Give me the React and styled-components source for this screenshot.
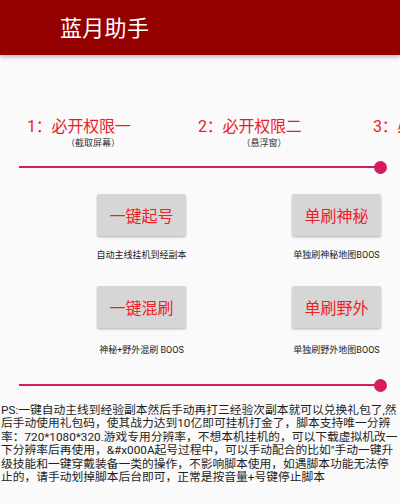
import React from 'react'
import styled, { createGlobalStyle } from 'styled-components'

const GlobalStyle = createGlobalStyle`
  html, body {
    margin: 0;
    padding: 0;
    background: #fafafa;
  }
  body {
    font-family: Roboto, "Noto Sans CJK SC", sans-serif;
  }
`

const Page = styled.div`
  width: 400px;
  height: 504px;
  overflow: hidden;
  background: #fafafa;
`

const Header = styled.div`
  height: 55px;
  background: #940000;
  display: flex;
  align-items: center;
  padding: 0 0 4px 60px;
  box-sizing: border-box;
  box-shadow: 0 2px 4px rgba(0, 0, 0, 0.25);
  position: relative;
`

const Title = styled.h1`
  margin: 0;
  color: #ffffff;
  font-size: 22px;
  font-weight: 400;
  letter-spacing: 0.3px;
`

const Steps = styled.div`
  display: flex;
  padding-left: 27px;
  margin-top: 62px;
  overflow: hidden;
  white-space: nowrap;
`

const Step = styled.div`
  flex: 0 0 ${p => p.$w}px;
  display: flex;
  flex-direction: column;
`

const StepLabel = styled.div`
  color: #e81c2c;
  font-size: 16px;
  line-height: 19px;
  letter-spacing: -0.2px;
`

const StepSub = styled.div`
  width: 132px;
  text-align: center;
  color: #333;
  font-size: 9px;
  line-height: 11px;
  margin-top: 2px;
`

const Slider = styled.div`
  display: flex;
  align-items: center;
  height: 14px;
  padding: 0 13px 0 19px;
  margin-top: ${p => p.$top}px;
`

const Track = styled.div`
  flex: 1;
  height: 2px;
  background: #d81b60;
`

const Thumb = styled.div`
  width: 13px;
  height: 13px;
  border-radius: 50%;
  background: #d81b60;
  margin-left: -6px;
  flex: 0 0 auto;
`

const ActionRow = styled.div`
  display: flex;
  gap: 106px;
  padding-left: 97px;
  margin-top: ${p => p.$top}px;
`

const Action = styled.div`
  width: 89px;
  display: flex;
  flex-direction: column;
  align-items: center;
`

const ActionButton = styled.button`
  width: 89px;
  height: 42px;
  border: none;
  border-radius: 2px;
  background: #d6d6d6;
  box-shadow: 0 1px 2px rgba(0, 0, 0, 0.2), 0 2px 3px rgba(0, 0, 0, 0.08);
  color: #f01e25;
  font-family: Roboto, "Noto Sans CJK SC", sans-serif;
  font-size: 16px;
  padding: 0;
`

const Caption = styled.div`
  white-space: nowrap;
  color: #222;
  font-size: 9px;
  line-height: 12px;
  margin-top: ${p => p.$gap}px;
`

const Note = styled.p`
  margin: 12px 0 0 0;
  color: #1e1e1e;
  font-size: 11.75px;
  line-height: 13.4px;
  padding: 0 0 0 1px;
`

const steps = [
  { label: '1：必开权限一', sub: '（截取屏幕）', w: 171 },
  { label: '2：必开权限二', sub: '（悬浮窗）', w: 175 },
  { label: '3：必开权限三', sub: '', w: 171 },
]

const rows = [
  [
    { text: '一键起号', caption: '自动主线挂机到经副本' },
    { text: '单刷神秘', caption: '单独刷神秘地图BOOS' },
  ],
  [
    { text: '一键混刷', caption: '神秘+野外混刷 BOOS' },
    { text: '单刷野外', caption: '单独刷野外地图BOOS' },
  ],
]

const App = () => {
  return (
    <Page>
      <GlobalStyle />
      <Header>
        <Title>蓝月助手</Title>
      </Header>
      <Steps>
        {steps.map(s => (
          <Step key={s.label} $w={s.w}>
            <StepLabel>{s.label}</StepLabel>
            <StepSub>{s.sub}</StepSub>
          </Step>
        ))}
      </Steps>
      <Slider $top={11}>
        <Track />
        <Thumb />
      </Slider>
      {rows.map((row, i) => (
        <ActionRow key={i} $top={i === 0 ? 20 : 25}>
          {row.map(a => (
            <Action key={a.text}>
              <ActionButton>{a.text}</ActionButton>
              <Caption $gap={i === 0 ? 13 : 16}>{a.caption}</Caption>
            </Action>
          ))}
        </ActionRow>
      ))}
      <Slider $top={22}>
        <Track />
        <Thumb />
      </Slider>
      <Note>
        PS:一键自动主线到经验副本然后手动再打三经验次副本就可以兑换礼包了,然后手动使用礼包码，使其战力达到10亿即可挂机打金了，脚本支持唯一分辨率：720*1080*320.游戏专用分辨率，不想本机挂机的，可以下载虚拟机改一下分辨率后再使用，&amp;#x000A起号过程中，可以手动配合的比如"手动一键升级技能和一键穿戴装备一类的操作，不影响脚本使用，如遇脚本功能无法停止的，请手动划掉脚本后台即可，正常是按音量+号键停止脚本
      </Note>
    </Page>
  )
}

export default App
